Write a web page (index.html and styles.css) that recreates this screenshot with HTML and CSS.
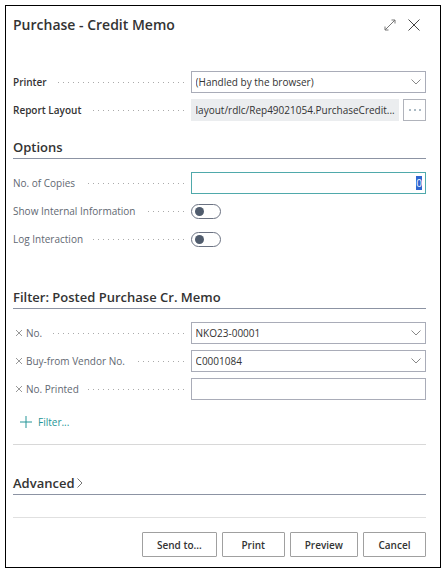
FILE: index.html
```html
<!DOCTYPE html>
<html lang="en">
<head>
<meta charset="utf-8">
<meta name="viewport" content="width=device-width, initial-scale=1">
<title>Purchase - Credit Memo</title>
<link rel="stylesheet" href="styles.css">
</head>
<body>
<main class="dialog">
  <header class="dialog-head">
    <h1>Purchase - Credit Memo</h1>
    <div class="window-actions">
      <button class="icon-button" type="button" aria-label="Expand">
        <svg width="12" height="12" viewBox="0 0 12 12"><path d="M1 11 11 1M7.500 1H11v3.500M1 7.500V11h3.500"/></svg>
      </button>
      <button class="icon-button close" type="button" aria-label="Close">
        <svg width="12" height="12" viewBox="0 0 12 12"><path d="m.5.5 11 11M11.5.5l-11 11"/></svg>
      </button>
    </div>
  </header>

  <form>
    <section class="fields print-fields">
      <div class="row strong">
        <div class="caption"><label for="printer">Printer</label></div>
        <div class="control picker">
          <select id="printer"><option>(Handled by the browser)</option></select>
          <svg class="chevron" width="10" height="6" viewBox="0 0 10 6"><path d="m.5.5 4.500 4.500 4.500-4.500"/></svg>
        </div>
      </div>
      <div class="row strong">
        <div class="caption"><label for="layout">Report Layout</label></div>
        <div class="control with-button">
          <input id="layout" class="locked" type="text" readonly value="layout/rdlc/Rep49021054.PurchaseCredit...">
          <button class="more" type="button" aria-label="Choose layout">
            <svg width="12" height="2" viewBox="0 0 12 2"><path d="M0 1h2M5 1h2M10 1h2"/></svg>
          </button>
        </div>
      </div>
    </section>

    <section>
      <h2>Options</h2>
      <div class="fields">
        <div class="row">
          <div class="caption"><label for="copies">No. of Copies</label></div>
          <div class="control"><input id="copies" class="number" type="text" inputmode="numeric" value="0"></div>
        </div>
        <div class="row">
          <div class="caption"><label for="internal">Show Internal Information</label></div>
          <div class="control"><input id="internal" class="switch" type="checkbox" role="switch"></div>
        </div>
        <div class="row">
          <div class="caption"><label for="log">Log Interaction</label></div>
          <div class="control"><input id="log" class="switch" type="checkbox" role="switch"></div>
        </div>
      </div>
    </section>

    <section class="filters">
      <h2>Filter: Posted Purchase Cr. Memo</h2>
      <div class="fields">
        <div class="row">
          <div class="caption">
            <button class="remove" type="button" aria-label="Remove No. filter"><svg width="6" height="6" viewBox="0 0 6 6"><path d="m0 0 6 6M6 0 0 6"/></svg></button>
            <label for="no">No.</label>
          </div>
          <div class="control picker">
            <select id="no"><option>NKO23-00001</option></select>
            <svg class="chevron" width="10" height="6" viewBox="0 0 10 6"><path d="m.5.5 4.500 4.500 4.500-4.500"/></svg>
          </div>
        </div>
        <div class="row">
          <div class="caption">
            <button class="remove" type="button" aria-label="Remove vendor filter"><svg width="6" height="6" viewBox="0 0 6 6"><path d="m0 0 6 6M6 0 0 6"/></svg></button>
            <label for="vendor">Buy-from Vendor No.</label>
          </div>
          <div class="control picker">
            <select id="vendor"><option>C0001084</option></select>
            <svg class="chevron" width="10" height="6" viewBox="0 0 10 6"><path d="m.5.5 4.500 4.500 4.500-4.500"/></svg>
          </div>
        </div>
        <div class="row">
          <div class="caption">
            <button class="remove" type="button" aria-label="Remove No. Printed filter"><svg width="6" height="6" viewBox="0 0 6 6"><path d="m0 0 6 6M6 0 0 6"/></svg></button>
            <label for="printed">No. Printed</label>
          </div>
          <div class="control"><input id="printed" type="text"></div>
        </div>
      </div>
      <button class="add-filter" type="button">
        <svg width="12" height="12" viewBox="0 0 12 12"><path d="M6 0v12M0 6h12"/></svg>
        Filter...
      </button>
    </section>

    <section class="advanced">
      <h2><button class="expander" type="button">Advanced<svg width="6" height="10" viewBox="0 0 6 10"><path d="m.5.5 4.500 4.500-4.500 4.500"/></svg></button></h2>
    </section>

    <footer class="actions">
      <button type="button">Send to...</button>
      <button type="button">Print</button>
      <button type="button">Preview</button>
      <button type="button">Cancel</button>
    </footer>
  </form>
</main>
<script src="script.js"></script>
</body>
</html>
```

FILE: styles.css
```css
* {
  box-sizing: border-box;
}

body {
  margin: 0;
  padding: 5px 7px 5px 5px;
  background: #fff;
  color: #333;
  font: 10px/14px "Open Sans", "Noto Sans", sans-serif;
}

button,
input,
select {
  margin: 0;
  color: inherit;
  font: inherit;
}

svg {
  display: block;
  flex: none;
  fill: none;
  stroke: currentColor;
}

.dialog {
  padding: 9px 14px 10px 7px;
  border: 1px solid #000;
}

.dialog-head {
  display: flex;
  align-items: center;
  justify-content: space-between;
  height: 20px;
}

h1,
h2 {
  margin: 0;
  color: #333;
  font-weight: 600;
}

h1 {
  font-size: 14px;
  line-height: 20px;
}

h2 {
  height: 22px;
  border-bottom: 1px solid #8c93a3;
  font-size: 13px;
  line-height: 20px;
}

.window-actions {
  display: flex;
  align-items: center;
  gap: 12px;
  padding-right: 6px;
}

.icon-button,
.remove,
.add-filter,
.expander {
  display: flex;
  align-items: center;
  padding: 0;
  border: 0;
  background: none;
}

.icon-button {
  color: #777;
}

.close {
  color: #444;
}

.fields {
  display: grid;
  gap: 6px;
  padding-top: 13px;
}

.print-fields {
  padding: 36px 0 16px;
}

.row {
  display: grid;
  grid-template-columns: 43fr 57fr;
  height: 22px;
}

.caption {
  display: flex;
  align-items: center;
  min-width: 0;
  padding-right: 7px;
  color: #5f6872;
}

.caption::after {
  content: "";
  flex: 1;
  height: 1px;
  margin-left: 9px;
  background: repeating-linear-gradient(to left, #aaa 0 1px, transparent 1px 5px);
}

.strong label {
  color: #333;
  font-weight: 600;
}

.control {
  display: flex;
  align-items: center;
  min-width: 0;
}

.control select,
.control input[type="text"] {
  flex: 1;
  width: 100%;
  min-width: 0;
  height: 22px;
  padding: 0 4px;
  border: 1px solid #a9acb8;
  border-radius: 0;
  outline: 0;
  background: #fff;
  appearance: none;
}

.picker {
  position: relative;
}

.chevron {
  position: absolute;
  right: 5px;
  color: #888;
  pointer-events: none;
}

.with-button {
  gap: 4px;
}

.control .locked[type="text"] {
  padding-right: 0;
  border-color: #ebedef;
  background: #ebedef;
}

.more {
  display: grid;
  place-items: center;
  width: 23px;
  height: 22px;
  padding: 0;
  border: 1px solid #b0b3bb;
  background: #fff;
  color: #59778a;
}

.control .number[type="text"] {
  border-color: #4fa9ab;
  padding: 0 3px;
  text-align: right;
}

.number::selection {
  background: #2f66d0;
  color: #fff;
}

.switch {
  display: flex;
  align-items: center;
  width: 30px;
  height: 15px;
  padding: 0 3px;
  border: 1px solid #6b7282;
  border-radius: 8px;
  background: #fff;
  appearance: none;
}

.switch::before {
  content: "";
  width: 9px;
  height: 9px;
  border-radius: 50%;
  background: #505c6d;
}

.switch:checked {
  justify-content: flex-end;
}

.filters {
  padding-top: 37px;
}

.remove {
  margin: 0 4px 0 3px;
  color: #999;
}

.add-filter {
  gap: 6px;
  height: 16px;
  margin: 14px 0 0 7px;
  color: #259597;
}

.advanced {
  margin-top: 14px;
  padding-top: 28px;
  border-top: 1px solid #d8d8d8;
}

.expander {
  gap: 3px;
}

.expander svg {
  color: #777;
}

.actions {
  display: flex;
  justify-content: flex-end;
  gap: 5px;
  margin-top: 22px;
  padding-top: 14px;
  border-top: 1px solid #e0e0e0;
}

.actions button {
  min-width: 63px;
  height: 25px;
  padding: 0 14px;
  border: 1px solid #a0a0a0;
  border-radius: 1px;
  background: #fff;
  color: #333;
  font-weight: 600;
}
```

FILE: script.js
```js
// Start with the copy count selected so that typing replaces it.
const copies = document.getElementById("copies");
copies.focus();
copies.select();
```
